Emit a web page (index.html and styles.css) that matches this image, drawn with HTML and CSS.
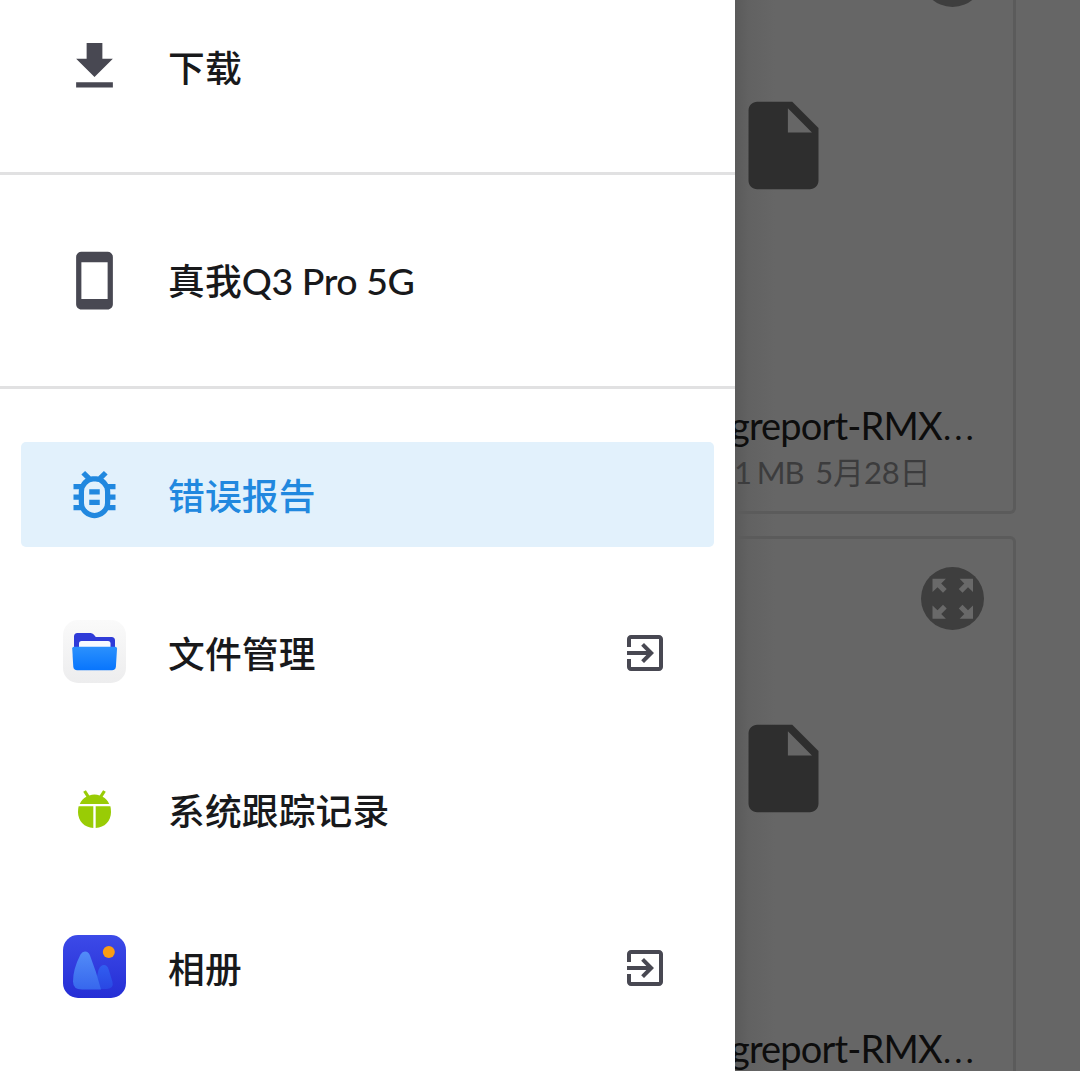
FILE: index.html
```html
<!DOCTYPE html>
<html lang="zh-CN">
<head>
<meta charset="utf-8">
<title>错误报告</title>
<link rel="stylesheet" href="styles.css">
</head>
<body>
<svg class="defs" aria-hidden="true">
  <defs>
    <symbol id="file" viewBox="0 0 24 24"><path d="M6 2c-1.1 0-1.99.9-1.99 2L4 20c0 1.1.89 2 1.99 2H18c1.1 0 2-.9 2-2V8l-6-6H6zm7 7V3.5L18.5 9H13z"/></symbol>
    <symbol id="exit" viewBox="0 0 24 24"><path d="M10.09 15.59L11.5 17l5-5-5-5-1.41 1.41L12.67 11H3v2h9.67l-2.58 2.59zM19 3H5c-1.11 0-2 .9-2 2v4h2V5h14v14H5v-4H3v4c0 1.1.89 2 2 2h14c1.1 0 2-.9 2-2V5c0-1.1-.9-2-2-2z"/></symbol>
    <symbol id="expand" viewBox="0 0 63 63">
      <circle cx="31.5" cy="31.5" r="31.5" fill="#3e3e3e"/>
      <g fill="#696969">
        <path id="arrow" d="M11.5 11.8H24.900L20.200 16.500L25.700 22L22 25.700L16.500 20.200L11.500 24.900Z"/>
        <use href="#arrow" transform="matrix(-1 0 0 1 63.5 0)"/>
        <use href="#arrow" transform="matrix(1 0 0 -1 0 63.5)"/>
        <use href="#arrow" transform="rotate(180 31.75 31.75)"/>
      </g>
    </symbol>
  </defs>
</svg>
<div class="screen">
  <nav class="drawer">
    <section class="group first">
      <a class="row">
        <svg class="icon" viewBox="0 0 24 24"><path d="M19 9h-4V3H9v6H5l7 7 7-7zM5 18v2h14v-2H5z"/></svg>
        <span class="label">下载</span>
      </a>
    </section>
    <section class="group">
      <a class="row">
        <svg class="icon" viewBox="0 0 24 24"><path d="M17 1.01L7 1c-1.1 0-2 .9-2 2v18c0 1.1.9 2 2 2h10c1.1 0 2-.9 2-2V3c0-1.1-.9-1.99-2-1.99zM17 19H7V5h10v14z"/></svg>
        <span class="label">真我<span class="latin">Q3 Pro 5G</span></span>
      </a>
    </section>
    <section class="group">
      <a class="row selected">
        <svg class="icon" viewBox="0 0 24 24"><path d="M20 8h-2.81c-.45-.78-1.07-1.45-1.82-1.96L17 4.41 15.59 3l-2.17 2.17C12.96 5.06 12.49 5 12 5s-.96.06-1.41.17L8.41 3 7 4.41l1.62 1.63C7.88 6.55 7.26 7.22 6.81 8H4v2h2.09c-.05.33-.09.66-.09 1v1H4v2h2v1c0 .34.04.67.09 1H4v2h2.81c1.04 1.79 2.97 3 5.19 3s4.15-1.21 5.19-3H20v-2h-2.09c.05-.33.09-.66.09-1v-1h2v-2h-2v-1c0-.34-.04-.67-.09-1H20V8zm-4 4v3c0 .22-.03.47-.07.7l-.1.65-.37.65c-.72 1.24-2.04 2-3.46 2s-2.74-.77-3.46-2l-.37-.64-.1-.65C8.03 15.48 8 15.23 8 15v-4c0-.23.03-.48.07-.7l.1-.65.37-.65c.3-.52.72-.97 1.21-1.31l.57-.39.74-.18c.31-.08.63-.12.94-.12.32 0 .63.04.95.12l.68.16.61.42c.5.34.91.78 1.21 1.31l.38.65.1.65c.04.22.07.47.07.69v1zm-6 2h4v2h-4zm0-4h4v2h-4z"/></svg>
        <span class="label">错误报告</span>
      </a>
      <a class="row">
        <svg class="icon app" viewBox="0 0 63 63">
          <defs>
            <linearGradient id="tile" x2="0" y2="1"><stop stop-color="#fafafa"/><stop offset="1" stop-color="#ededee"/></linearGradient>
            <linearGradient id="folder" x2="0" y2="1"><stop stop-color="#2b91fd"/><stop offset="1" stop-color="#0875fd"/></linearGradient>
          </defs>
          <rect width="63" height="63" rx="15" fill="url(#tile)"/>
          <path d="M11 30V16.5Q11 13 14.5 13H27.500Q29.500 13 30.700 14.500L32.800 17H48.500Q52 17 52 20.500V30Z" fill="#2f3bd8"/>
          <path d="M16 29V23.500Q16 21 18.500 21H45Q47.500 21 47.500 23.500V29Z" fill="#f6faff"/>
          <path d="M9.200 28.500Q9.200 26.700 11 26.700H52.200Q54 26.700 54 28.500L52.900 46.500Q52.600 50.300 49 50.300H14.200Q10.600 50.300 10.300 46.500Z" fill="url(#folder)"/>
        </svg>
        <span class="label">文件管理</span>
        <svg class="open"><use href="#exit"/></svg>
      </a>
      <a class="row">
        <svg class="icon" viewBox="0 0 63 63">
          <g fill="#99cc05">
            <path d="M16.800 26C18 22.800 20.500 20.300 23.400 18.700L20.200 13.800L22.900 12.200L26.300 17.400Q31.500 15.800 36.700 17.400L40.100 12.200L42.800 13.800L39.600 18.700C42.500 20.300 45 22.800 46.200 26Z"/>
            <path d="M15.600 28.200H30.300V50C21.500 49.600 15 43 15 34Q15 31 15.600 28.200Z"/>
            <path d="M32.700 28.200H47.400Q48 31 48 34C48 43 41.500 49.600 32.700 50Z"/>
          </g>
        </svg>
        <span class="label">系统跟踪记录</span>
      </a>
      <a class="row">
        <svg class="icon app" viewBox="0 0 63 63">
          <defs>
            <linearGradient id="sky" x2="0" y2="1"><stop stop-color="#3c4ae8"/><stop offset="1" stop-color="#252ed5"/></linearGradient>
            <linearGradient id="peak" x2="0" y2="1"><stop stop-color="#528cf8"/><stop offset="1" stop-color="#3767ed"/></linearGradient>
            <linearGradient id="hill" x2="0" y2="1"><stop stop-color="#315ef0"/><stop offset="1" stop-color="#2947e3"/></linearGradient>
          </defs>
          <rect width="63" height="63" rx="15" fill="url(#sky)"/>
          <path d="M31 54L35.500 35Q37.500 30 41 30Q44 30 45.500 34L49.500 47Q51 53 44 54Z" fill="url(#hill)"/>
          <path d="M17.500 19.500Q19.300 16.500 22 16.500Q25.500 16.500 27 20.500Q33.500 37 38 54.500H19Q10 54.500 10 46.500Q10 34 17.500 19.500Z" fill="url(#peak)"/>
          <circle cx="45.800" cy="17" r="6" fill="#fa9d13"/>
        </svg>
        <span class="label">相册</span>
        <svg class="open"><use href="#exit"/></svg>
      </a>
    </section>
  </nav>
  <main class="files">
    <article class="card">
      <svg class="zoom"><use href="#expand"/></svg>
      <svg class="file"><use href="#file"/></svg>
      <div class="name">greport-RMX<span class="dots">…</span></div>
      <div class="meta"><span class="size">1 MB</span><span class="date">5月28日</span></div>
    </article>
    <article class="card">
      <svg class="zoom"><use href="#expand"/></svg>
      <svg class="file"><use href="#file"/></svg>
      <div class="name">greport-RMX<span class="dots">…</span></div>
      <div class="meta"><span class="size">1 MB</span><span class="date">5月28日</span></div>
    </article>
  </main>
</div>
</body>
</html>
```
FILE: styles.css
```css
* { box-sizing: border-box; }
body { margin: 0; font-family: Lato, "Noto Sans CJK SC", sans-serif; }
svg { display: block; flex: none; }
.defs { position: absolute; width: 0; height: 0; }
.screen { display: flex; width: 1080px; height: 1071px; overflow: hidden; background: #666; }

.drawer { flex: none; width: 735px; height: 1071px; overflow: hidden; background: #fff; }
.group { display: flex; flex-direction: column; gap: 52.5px; padding: 53px 21px; }
.group + .group { border-top: 3px solid #e1e1e2; }
.group.first { padding-top: 14px; }
.row { display: flex; align-items: center; height: 105px; padding: 0 45px 0 42px; border-radius: 5px; color: #18191b; }
.selected { background: #e2f1fc; color: #2188df; }
.icon { width: 63px; height: 63px; fill: #484852; }
.icon.app { margin-bottom: 2px; }
.selected .icon { fill: #2188df; }
.label { flex: 1; margin-left: 42px; padding-bottom: 1px; font: 500 36.75px/54px "Noto Sans CJK SC", sans-serif; letter-spacing: .15px; white-space: nowrap; }
.latin { font-family: Lato, sans-serif; font-size: 37.5px; letter-spacing: -.45px; }
.open { width: 48px; height: 48px; margin-top: 1px; fill: #484852; }

.files { flex: 1; height: 1071px; overflow: hidden; padding-right: 64px; background: linear-gradient(90deg, #5a5a5a, #626262 14px, #666 40px); }
.card { display: flex; flex-direction: column; height: 601px; margin-bottom: 22px; border: 3px solid #5b5b5b; border-left: 0; border-radius: 0 6px 6px 0; }
.card:first-child { margin-top: -87px; }
.zoom { width: 63px; height: 63px; margin: 28px 29px 0 auto; }
.file { width: 105px; height: 105px; margin: 86px 0 0 -4px; fill: #2e2e2e; }
.name { margin: 201px 0 0 -5px; font-size: 38px; line-height: 52px; letter-spacing: -.85px; white-space: nowrap; color: #0d0d0d; }
.dots { font-size: 46px; font-weight: 300; line-height: 0; }
.meta { display: flex; gap: 12px; font: 400 31px/42px Lato, "Noto Sans CJK SC", sans-serif; white-space: nowrap; color: #3c3c3d; }
.size { margin-left: -1px; word-spacing: -1px; letter-spacing: -1.1px; }
.date { letter-spacing: -.2px; }
```
